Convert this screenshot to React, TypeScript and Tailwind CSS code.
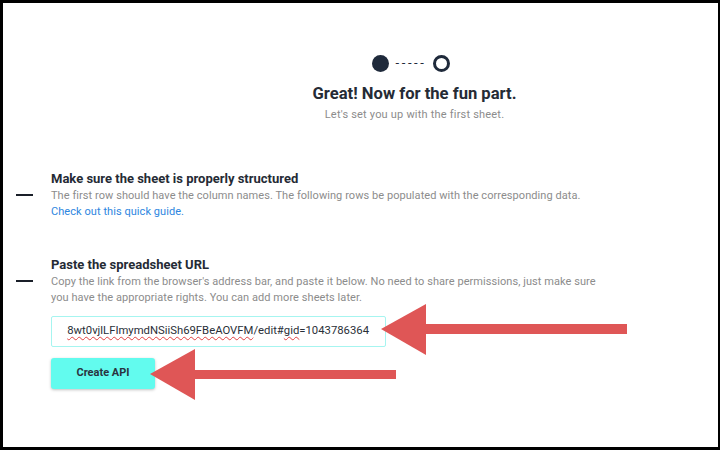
const Section = ({
  title,
  lines,
  link,
}: {
  title: string
  lines: string[]
  link?: string
}) => {
  return (
    <div className="flex">
      <div className="w-[48px] shrink-0 flex items-center">
        <div className="ml-[13px] w-[17px] h-[1.5px] bg-[#1a1f29]" />
      </div>
      <div>
        <h4 className="text-[13px] leading-[18px] font-bold text-[#252b35]">{title}</h4>
        {lines.map((l) => (
          <p key={l} className="text-[11px] leading-[16px] text-[#8c8c8c] tracking-[0.06px]">
            {l}
          </p>
        ))}
        {link && <p className="text-[11px] leading-[16px] text-[#2d86e0] tracking-[0.06px]">{link}</p>}
      </div>
    </div>
  )
}

// coordinates are inside the 3px frame
const Arrows = () => (
  <svg className="absolute inset-0 pointer-events-none" width="715" height="444">
    <rect x="421" y="321" width="203" height="10" fill="#df5656" />
    <polygon points="378,326 423,301 423,352" fill="#df5656" />
    <rect x="191" y="367" width="202" height="9" fill="#df5656" />
    <polygon points="147,371 192,346 192,397" fill="#df5656" />
  </svg>
)

const App = () => {
  return (
    <div
      className="relative w-[720px] h-[450px] bg-white border-black border-t-[3px] border-l-[3px] border-r-[2px] border-b-[3px] overflow-hidden"
      style={{ fontFamily: 'Roboto, "Liberation Sans", sans-serif' }}
    >
      <div className="pl-[108px] pt-[52px] flex flex-col items-center">
        <div className="flex items-center gap-[7px] -ml-[7px]">
          <div className="w-[17px] h-[17px] rounded-full bg-[#1f2a3b]" />
          <span className="text-[13px] leading-none text-[#1f2a3b] tracking-[2.6px] -mt-[2px]">-----</span>
          <div className="w-[17px] h-[17px] rounded-full border-[3px] border-[#1f2a3b]" />
        </div>
        <h2 className="mt-[11px] text-[16.6px] leading-[22px] font-bold text-[#252b35]">
          Great! Now for the fun part.
        </h2>
        <p className="mt-[2px] text-[11px] leading-[16px] text-[#8c8c8c] tracking-[0.2px]">
          Let's set you up with the first sheet.
        </p>
      </div>

      <div className="mt-[47px]">
        <Section
          title="Make sure the sheet is properly structured"
          lines={[
            'The first row should have the column names. The following rows be populated with the corresponding data.',
          ]}
          link="Check out this quick guide."
        />
      </div>

      <div className="mt-[36px]">
        <Section
          title="Paste the spreadsheet URL"
          lines={[
            "Copy the link from the browser's address bar, and paste it below. No need to share permissions, just make sure",
            'you have the appropriate rights. You can add more sheets later.',
          ]}
        />
      </div>

      <div className="pl-[48px] mt-[10px]">
        <div className="w-[335px] h-[31px] border border-[#a6f5f0] rounded-[2px] flex items-center justify-end pr-[16px] overflow-hidden">
          <span className="text-[11.3px] text-[#2a2f38] whitespace-nowrap">
            <span className="underline decoration-wavy decoration-[#e04040] decoration-1 underline-offset-2">
              8wt0vjlLFImymdNSiiSh69FBeAOVFM
            </span>
            /edit#
            <span className="underline decoration-wavy decoration-[#e04040] decoration-1 underline-offset-2">gid</span>
            =1043786364
          </span>
        </div>
        <button className="mt-[11px] w-[104px] h-[31px] bg-[#62fbee] rounded-[3px] shadow-[0_1px_3px_rgba(0,0,0,0.25)] text-[11px] font-bold text-[#2a3340]">
          Create API
        </button>
      </div>

      <Arrows />
    </div>
  )
}

export default App
